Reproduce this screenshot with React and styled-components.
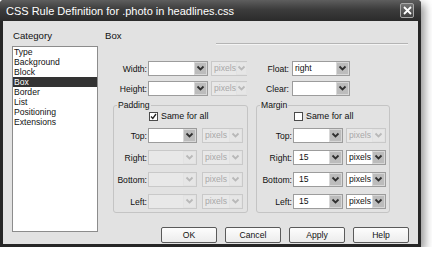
import React from 'react'
import styled, { createGlobalStyle } from 'styled-components'

const GlobalStyle = createGlobalStyle`
  body {
    margin: 0;
    background: #fff;
    font-family: "Liberation Sans", Arial, sans-serif;
  }
`

const categories = ['Type', 'Background', 'Block', 'Box', 'Border', 'List', 'Positioning', 'Extensions']

const Window = styled.div`
  width: 421px;
  height: 247px;
  box-sizing: border-box;
  background: #262626;
  border-radius: 4px 4px 0 0;
  padding: 0 3px 3px;
  display: flex;
  flex-direction: column;
  box-shadow: 4px 4px 8px rgba(0, 0, 0, 0.4);
`

const TitleBar = styled.div`
  height: 21px;
  flex: none;
  display: flex;
  align-items: center;
  justify-content: space-between;
  margin: 0 -3px;
  padding: 0 7px 0 6px;
  border-radius: 4px 4px 0 0;
  background: linear-gradient(#5e5e5e, #3c3c3c 45%, #2b2b2b);
  color: #fff;
  font-size: 11px;
`

const CloseButton = styled.div`
  width: 14px;
  height: 15px;
  box-sizing: border-box;
  border: 1px solid #a8a8a8;
  border-radius: 2px;
  background: linear-gradient(#757575, #404040);
  display: grid;
  place-items: center;
`

const Body = styled.div`
  flex: 1;
  background: #e2e2e2;
  display: flex;
  padding: 9px 0 0 9px;
  font-size: 8.6px;
  color: #111;
`

const LeftCol = styled.div`
  width: 86px;
  display: flex;
  flex-direction: column;
`

const Caption = styled.div`
  height: 12px;
  line-height: 12px;
  padding-left: 1px;
  font-size: 9.6px;
`

const List = styled.div`
  margin-top: 4px;
  height: 186px;
  box-sizing: border-box;
  background: #fff;
  border: 1px solid #8c8c8c;
`

const Item = styled.div`
  height: 10px;
  line-height: 10px;
  padding-left: 1px;
  background: ${p => (p.$active ? '#333' : 'transparent')};
  color: ${p => (p.$active ? '#fff' : '#111')};
`

const Panel = styled.div`
  width: 305px;
  margin-left: 6px;
  display: flex;
  flex-direction: column;
`

const Divider = styled.div`
  height: 1px;
  margin: 1px 0 0 112px;
  width: 192px;
  background: #b4b4b4;
  border-bottom: 1px solid #f4f4f4;
`

const Rows = styled.div`
  margin-top: 16px;
  display: flex;
  flex-direction: column;
  gap: 5px;
`

const Row = styled.div`
  display: flex;
  align-items: center;
  height: 15px;
`

const Label = styled.span`
  width: ${p => p.$w}px;
  margin-left: ${p => p.$ml || 0}px;
  margin-right: 1px;
  text-align: right;
  white-space: nowrap;
`

const SelectBox = styled.div`
  width: ${p => p.$w}px;
  margin-left: ${p => p.$ml || 0}px;
  height: 15px;
  box-sizing: border-box;
  border: 1px solid ${p => (p.$off ? '#c9c9c9' : '#9c9c9c')};
  background: ${p => (p.$off ? '#e8e8e8' : '#fff')};
  color: ${p => (p.$off ? '#a9a9a9' : '#111')};
  display: flex;
  align-items: center;
  justify-content: space-between;
  padding-left: ${p => (p.$num ? 5 : 2)}px;
  line-height: 13px;
`

const ArrowBtn = styled.div`
  width: 13px;
  height: 13px;
  box-sizing: border-box;
  border: 1px solid ${p => (p.$off ? '#e2e2e2' : '#d8d8d8')};
  background: ${p => (p.$off ? '#e6e6e6' : '#bcbcbc')};
  display: grid;
  place-items: center;
`

const Groups = styled.div`
  margin: 4px 0 0 9px;
  display: flex;
  gap: 8px;
`

const Group = styled.fieldset`
  margin: 0;
  width: ${p => p.$w}px;
  height: 113px;
  box-sizing: border-box;
  padding: 0;
  border: 1px solid #c4c4c4;
  border-radius: 3px;
  display: flex;
  flex-direction: column;
  gap: 7px;
`

const Legend = styled.legend`
  margin-left: 3px;
  padding: 0 1px;
  font-size: 8.6px;
  line-height: 10px;
`

const CheckRow = styled.label`
  display: flex;
  align-items: center;
  gap: 3px;
  height: 10px;
  margin: 1px 0 0 ${p => p.$ml}px;
  font-size: 8.9px;
`

const Box = styled.span`
  width: 9px;
  height: 9px;
  box-sizing: border-box;
  border: 1px solid #4a4a4a;
  background: #fff;
  display: grid;
  place-items: center;
`

const Buttons = styled.div`
  margin-top: 14px;
  display: flex;
  justify-content: flex-end;
  gap: 8px;
`

const Button = styled.div`
  width: 56px;
  height: 16px;
  box-sizing: border-box;
  border: 1px solid #5a5a5a;
  border-radius: 2px;
  background: linear-gradient(#fdfdfd, #ececec);
  display: grid;
  place-items: center;
  font-size: 8.6px;
`

const Chevron = ({ off }) => (
  <svg width="9" height="7" viewBox="0 0 9 7">
    <polyline points="1.5,1.5 4.5,4.5 7.5,1.5" fill="none" stroke={off ? '#b9b9b9' : '#303030'} strokeWidth="1.8" />
  </svg>
)

const Select = ({ w, ml, off, num, value }) => (
  <SelectBox $w={w} $ml={ml} $off={off} $num={num}>
    <span>{value}</span>
    <ArrowBtn $off={off}>
      <Chevron off={off} />
    </ArrowBtn>
  </SelectBox>
)

const Check = ({ checked }) => (
  <Box>
    {checked && (
      <svg width="7" height="7" viewBox="0 0 7 7">
        <polyline points="1,3.5 2.8,5.5 6,1" fill="none" stroke="#222" strokeWidth="1.3" />
      </svg>
    )}
  </Box>
)

const padding = [
  { name: 'Top:', on: true },
  { name: 'Right:' },
  { name: 'Bottom:' },
  { name: 'Left:' },
]

const margin = [
  { name: 'Top:', on: true },
  { name: 'Right:', on: true, val: '15', unit: true },
  { name: 'Bottom:', on: true, val: '15', unit: true },
  { name: 'Left:', on: true, val: '15', unit: true },
]

export default function App() {
  return (
    <>
      <GlobalStyle />
      <Window>
        <TitleBar>
          <span>CSS Rule Definition for .photo in headlines.css</span>
          <CloseButton>
            <svg width="9" height="9" viewBox="0 0 9 9">
              <path d="M1 1 L8 8 M8 1 L1 8" stroke="#fff" strokeWidth="1.8" />
            </svg>
          </CloseButton>
        </TitleBar>
        <Body>
          <LeftCol>
            <Caption>Category</Caption>
            <List>
              {categories.map(c => (
                <Item key={c} $active={c === 'Box'}>{c}</Item>
              ))}
            </List>
          </LeftCol>
          <Panel>
            <Caption>Box</Caption>
            <Divider />
            <Rows>
              <Row>
                <Label $w={43}>Width:</Label>
                <Select w={60} />
                <Select w={36} ml={3} off value="pixels" />
                <Label $w={39} $ml={3}>Float:</Label>
                <Select w={58} ml={2} value="right" />
              </Row>
              <Row>
                <Label $w={43}>Height:</Label>
                <Select w={60} />
                <Select w={36} ml={3} off value="pixels" />
                <Label $w={39} $ml={3}>Clear:</Label>
                <Select w={58} ml={2} />
              </Row>
            </Rows>
            <Groups>
              <Group $w={135}>
                <Legend>Padding</Legend>
                <CheckRow $ml={35}>
                  <Check checked />
                  Same for all
                </CheckRow>
                {padding.map(r => (
                  <Row key={r.name}>
                    <Label $w={33}>{r.name}</Label>
                    <Select w={49} off={!r.on} />
                    <Select w={41} ml={5} off value="pixels" />
                  </Row>
                ))}
              </Group>
              <Group $w={134}>
                <Legend>Margin</Legend>
                <CheckRow $ml={37}>
                  <Check />
                  Same for all
                </CheckRow>
                {margin.map(r => (
                  <Row key={r.name}>
                    <Label $w={35}>{r.name}</Label>
                    <Select w={50} off={!r.on} num value={r.val} />
                    <Select w={40} ml={3} off={!r.unit} value="pixels" />
                  </Row>
                ))}
              </Group>
            </Groups>
            <Buttons>
              <Button>OK</Button>
              <Button>Cancel</Button>
              <Button>Apply</Button>
              <Button>Help</Button>
            </Buttons>
          </Panel>
        </Body>
      </Window>
    </>
  )
}
